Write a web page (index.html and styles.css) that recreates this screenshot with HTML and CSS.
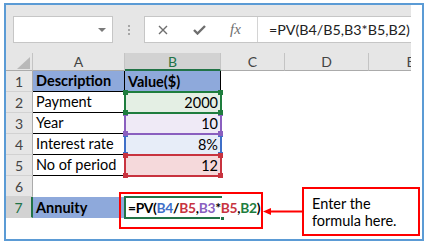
FILE: index.html
```html
<!DOCTYPE html>
<html lang="en">
<head>
    <meta charset="UTF-8">
    <title>PV Annuity</title>
    <link rel="stylesheet" href="styles.css">
</head>
<body>
    <div class="frame">
        <div class="excel">
            <div class="fbar">
                <div class="namebox"><span class="caret"></span></div>
                <div class="dots"><i></i><i></i><i></i></div>
                <div class="fbox">
                    <div class="btns">
                        <svg class="ico-x" width="10" height="10" viewBox="0 0 10 10"><path d="M1 1L9 9M9 1L1 9" stroke="#6e6e6e" stroke-width="1.4" fill="none"/></svg>
                        <svg class="ico-ok" width="13" height="10" viewBox="0 0 13 10"><path d="M1 5L4.5 8.5L12 1" stroke="#6e6e6e" stroke-width="2.4" fill="none"/></svg>
                        <span class="fx">fx</span>
                    </div>
                    <div class="finput">=PV(B4/B5,B3*B5,B2)</div>
                </div>
            </div>

            <div class="sheet">
                <div class="corner"><svg width="27" height="18" viewBox="0 0 27 18"><polygon points="24,4 24,16 11,16" fill="#b9b9b9"/></svg></div>
                <div class="ch">A</div>
                <div class="ch sel">B</div>
                <div class="ch">C</div>
                <div class="ch">D</div>
                <div class="ch">E</div>

                <div class="rh">1</div>
                <div class="c blue b bd-b bd-r">Description</div>
                <div class="c blue b bd-r">Value($)</div>
                <div class="c"></div><div class="c"></div><div class="c"></div>

                <div class="rh">2</div>
                <div class="c bd-b bd-r">Payment</div>
                <div class="c r f-g">2000</div>
                <div class="c"></div><div class="c"></div><div class="c"></div>

                <div class="rh">3</div>
                <div class="c bd-b bd-r">Year</div>
                <div class="c r f-p">10</div>
                <div class="c"></div><div class="c"></div><div class="c"></div>

                <div class="rh">4</div>
                <div class="c bd-b bd-r">Interest rate</div>
                <div class="c r f-bl">8%</div>
                <div class="c"></div><div class="c"></div><div class="c"></div>

                <div class="rh">5</div>
                <div class="c bd-b bd-r">No of period</div>
                <div class="c r f-r">12</div>
                <div class="c"></div><div class="c"></div><div class="c"></div>

                <div class="rh">6</div>
                <div class="c"></div><div class="c"></div><div class="c"></div><div class="c"></div><div class="c"></div>

                <div class="rh sel">7</div>
                <div class="c blue b">Annuity</div>
                <div class="c b formula">=PV(<span class="k-bl">B4</span>/<span class="k-r">B5</span>,<span class="k-p">B3</span>*<span class="k-r">B5</span>,<span class="k-g">B2</span>)</div>
                <div class="c"></div><div class="c"></div><div class="c"></div>
            </div>
        </div>

        <!-- formula reference highlights -->
        <div class="ref ref-blue r4"><i class="tl"></i><i class="tr"></i><i class="bl"></i><i class="br"></i></div>
        <div class="ref ref-purple r3"><i class="tl"></i><i class="tr"></i><i class="bl"></i><i class="br"></i></div>
        <div class="ref ref-red r5"><i class="tl"></i><i class="tr"></i><i class="bl"></i><i class="br"></i></div>
        <div class="ref ref-green r2"><i class="tl"></i><i class="tr"></i><i class="bl"></i><i class="br"></i></div>
        <div class="cursel"><i></i></div>

        <!-- annotation -->
        <div class="mark"></div>
        <svg class="arrow" width="41" height="11" viewBox="0 0 41 11">
            <line x1="8" y1="5.5" x2="41" y2="5.5" stroke="#ff0000" stroke-width="2"/>
            <polygon points="1,5.5 9,2 9,9" fill="#ff0000"/>
        </svg>
        <div class="callout">Enter the<br>formula here.</div>
    </div>
</body>
</html>
```

FILE: styles.css
```css
:root {
    --frame: #5b9bd5;
    --bar: #e6e6e6;
    --head: #e6e6e6;
    --head-sel: #d2d2d2;
    --xl-green: #217346;
    --ref-blue: #3f6fc8;
    --ref-red: #c8333f;
    --ref-purple: #8a5fbf;
    --ref-green: #1e7d3e;
}

* {
    margin: 0;
    padding: 0;
    box-sizing: border-box;
}

body {
    background: #fff;
    font-family: Lato, "Liberation Sans", sans-serif;
    color: #000;
}

.frame {
    position: relative;
    width: 420px;
    height: 238px;
    margin: 3px 0 0 4px;
    border: 2px solid var(--frame);
    background: #fff;
}

.excel {
    width: 405px;
    overflow: hidden;
}

/* formula bar */
.fbar {
    display: flex;
    align-items: flex-start;
    height: 48px;
    padding: 11px 0 0 7px;
    background: var(--bar);
}

.namebox {
    display: flex;
    flex-shrink: 0;
    justify-content: flex-end;
    align-items: center;
    width: 100px;
    height: 27px;
    padding-right: 6px;
    background: #fff;
    border: 1px solid #c6c6c6;
}

.caret {
    width: 0;
    height: 0;
    border-left: 4px solid transparent;
    border-right: 4px solid transparent;
    border-top: 4px solid #7a7a7a;
}

.dots {
    display: flex;
    flex-direction: column;
    flex-shrink: 0;
    align-items: center;
    gap: 2px;
    width: 31px;
    padding-top: 9px;
}

.dots i {
    display: block;
    width: 2px;
    height: 2px;
    background: #a6a6a6;
}

.fbox {
    display: flex;
    flex: 1;
    min-width: 0;
    height: 27px;
    background: #fff;
    border: 1px solid #c6c6c6;
    border-right: none;
}

.btns {
    display: flex;
    flex-shrink: 0;
    align-items: center;
    width: 112px;
}

.ico-x {
    margin-left: 13px;
}

.ico-ok {
    margin-left: 25px;
}

.fx {
    margin-left: 24px;
    font-family: "Liberation Serif", serif;
    font-style: italic;
    font-size: 15px;
    color: #6e6e6e;
}

.finput {
    flex: 1;
    min-width: 0;
    padding-left: 11px;
    border-left: 1px solid #d4d4d4;
    font-size: 14.3px;
    line-height: 25px;
    color: #222;
    white-space: nowrap;
    overflow: hidden;
}

/* grid */
.sheet {
    display: grid;
    grid-template-columns: 27px 92px 96px 64px 84px 84px;
    grid-template-rows: 18px repeat(7, 21px);
    font-size: 14.5px;
}

.corner,
.ch {
    background: var(--head);
    border-right: 1px solid #c4c4c4;
    border-bottom: 1px solid #ababab;
}

.ch {
    text-align: center;
    line-height: 17px;
    font-size: 14px;
    color: #444;
}

.ch.sel {
    background: var(--head-sel);
    color: var(--xl-green);
    border-bottom: 2px solid var(--xl-green);
}

.rh {
    background: var(--head);
    border-right: 1px solid #ababab;
    border-bottom: 1px solid #d2d2d2;
    text-align: center;
    line-height: 21px;
    font-size: 14px;
    color: #444;
}

.rh.sel {
    background: var(--head-sel);
    color: var(--xl-green);
    border-right: 2px solid var(--xl-green);
}

.c {
    display: flex;
    align-items: flex-end;
    padding: 0 3px 1px;
    line-height: 18px;
    white-space: nowrap;
}

.c.r {
    justify-content: flex-end;
}

.b {
    font-weight: bold;
}

.blue {
    background: #8ea9db;
}

.bd-b {
    border-bottom: 1px solid #000;
}

.bd-r {
    border-right: 1px solid #000;
}

.f-g { background: #e4efe4; }
.f-p { background: #efeaf6; }
.f-bl { background: #e7edf8; }
.f-r { background: #f5d9db; }

.formula {
    position: relative;
    z-index: 2;
    font-size: 13.8px;
    letter-spacing: -0.3px;
}

.k-bl { color: var(--ref-blue); }
.k-r { color: var(--ref-red); }
.k-p { color: var(--ref-purple); }
.k-g { color: var(--ref-green); }

/* reference boxes over column B */
.ref {
    position: absolute;
    left: 118px;
    width: 98px;
    height: 23px;
    border: 2px solid;
}

.ref i {
    position: absolute;
    width: 5px;
    height: 5px;
    background: currentColor;
}

.ref .tl { left: -3px; top: -3px; }
.ref .tr { right: -3px; top: -3px; }
.ref .bl { left: -3px; bottom: -3px; }
.ref .br { right: -3px; bottom: -3px; }

.r2 { top: 86px; }
.r3 { top: 107px; }
.r4 { top: 128px; }
.r5 { top: 149px; }

.ref-green { color: var(--ref-green); border-color: var(--ref-green); }
.ref-purple { color: var(--ref-purple); border-color: var(--ref-purple); }
.ref-blue { color: var(--ref-blue); border-color: var(--ref-blue); }
.ref-red { color: var(--ref-red); border-color: var(--ref-red); }

.cursel {
    position: absolute;
    left: 118px;
    top: 191px;
    width: 98px;
    height: 23px;
    border: 2px solid var(--xl-green);
    border-right: none;
}

.cursel i {
    position: absolute;
    right: -3px;
    bottom: -4px;
    width: 5px;
    height: 5px;
    background: var(--xl-green);
    border: 1px solid #fff;
}

/* annotation */
.mark {
    position: absolute;
    left: 113px;
    top: 187px;
    width: 144px;
    height: 37px;
    border: 2px solid #ff0000;
}

.arrow {
    position: absolute;
    left: 256px;
    top: 201px;
}

.callout {
    position: absolute;
    left: 296px;
    top: 182px;
    width: 118px;
    height: 49px;
    padding: 6px 0 0 8px;
    border: 2px solid #ff0000;
    background: #fff;
    font-size: 14.5px;
    line-height: 17px;
    color: #000;
}
```
